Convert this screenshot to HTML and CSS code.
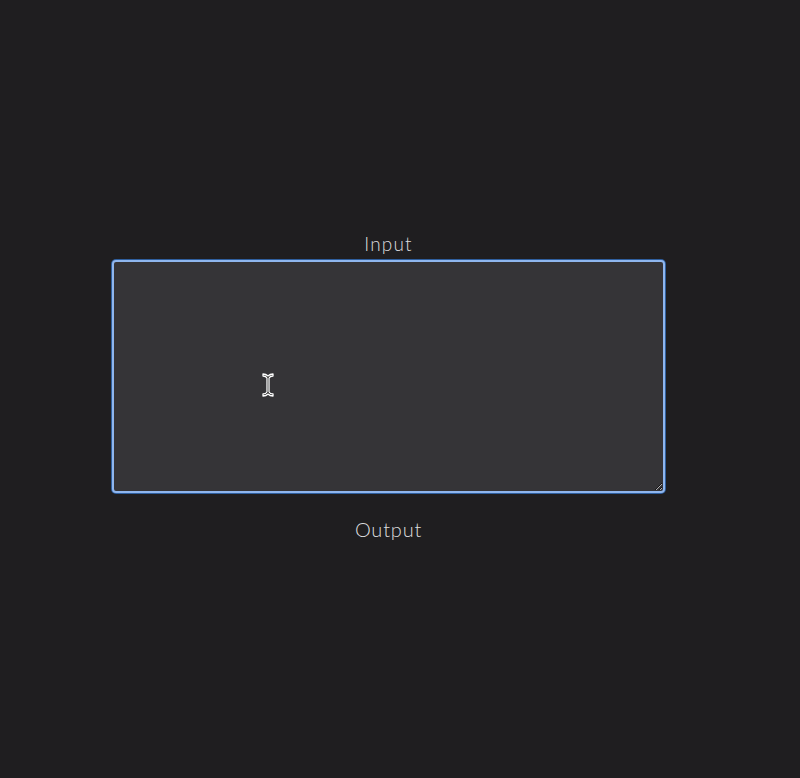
FILE: index.html
```html
<!DOCTYPE html>
<html>
<head>
<meta charset="utf-8">
<link rel="stylesheet" href="styles.css">
</head>
<body>
<main class="page">
  <label class="label label-input" for="inp">Input</label>
  <div class="field">
    <textarea id="inp" class="box"></textarea>
    <svg class="cursor" width="14" height="26" viewBox="0 0 14 26">
      <path d="M2 2 Q5 2 7 4 Q9 2 12 2 L12 4 Q9 4 8 6 L8 20 Q9 22 12 22 L12 24 Q9 24 7 22 Q5 24 2 24 L2 22 Q5 22 6 20 L6 6 Q5 4 2 4 Z" fill="#000" stroke="#fff" stroke-width="1.3" stroke-linejoin="round"/>
    </svg>
  </div>
  <div class="label label-output">Output</div>
</main>
</body>
</html>
```
FILE: styles.css
```css
html, body {
  margin: 0;
  padding: 0;
  background: #1f1e20;
  height: 100%;
}
.page {
  width: 553px;
  margin-left: 112px;
  padding-top: 231px;
  display: flex;
  flex-direction: column;
  align-items: center;
  font-family: Lato, "Open Sans", sans-serif;
  font-weight: 300;
  color: #dcdcde;
}
.label {
  display: block;
  line-height: 26px;
}
.label-input {
  font-size: 19px;
  letter-spacing: 1.2px;
  margin-bottom: 3px;
}
.label-output {
  font-size: 20px;
  letter-spacing: 0.8px;
  margin-top: 23px;
}
.field {
  position: relative;
  width: 553px;
  height: 233px;
}
.box {
  box-sizing: border-box;
  width: 553px;
  height: 233px;
  margin: 0;
  background: #353437;
  border: 2px solid #8fb6ee;
  border-radius: 4px;
  box-shadow: 0 0 0 1px #2f5f9e;
  outline: none;
  resize: both;
  color: #ddd;
}
.cursor {
  position: absolute;
  left: 149px;
  top: 112px;
}
```
